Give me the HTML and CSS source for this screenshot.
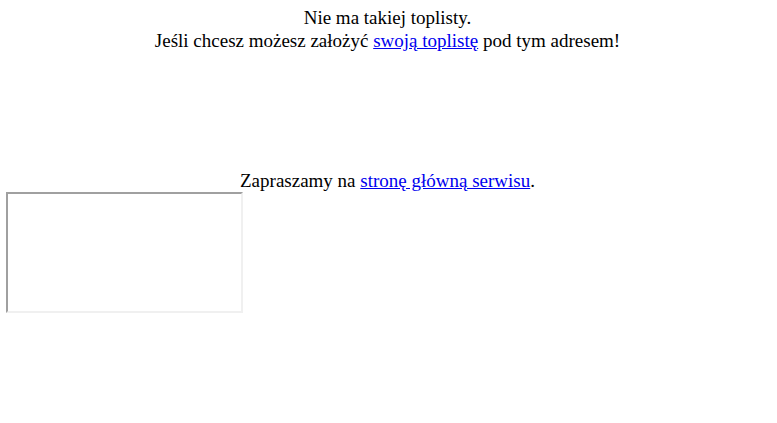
FILE: index.html
```html
<!DOCTYPE html>
<html lang="pl">
<head>
<meta charset="utf-8">
<title>Nie ma takiej toplisty</title>
<link rel="stylesheet" href="styles.css">
</head>
<body>
<div class="msg">
Nie ma takiej toplisty.<br>
Jeśli chcesz możesz założyć <a href="#">swoją toplistę</a> pod tym adresem!
</div>
<div class="invite">Zapraszamy na <a href="#">stronę główną serwisu</a>.</div>
<div class="frame"></div>
</body>
</html>
```
FILE: styles.css
```css
html, body {
  background: #fff;
}
body {
  margin: 6px 8px 0 6px;
  font-family: "Liberation Serif", "Times New Roman", serif;
  font-size: 19px;
  line-height: 23px;
  color: #000;
}
a {
  color: #0000ee;
}
.msg {
  text-align: center;
}
.invite {
  text-align: center;
  margin-top: 117px;
}
.frame {
  width: 233px;
  height: 117px;
  border-style: solid;
  border-width: 2px;
  border-color: #a0a0a0 #f0f0f0 #f0f0f0 #a0a0a0;
  background: #fff;
}
```
